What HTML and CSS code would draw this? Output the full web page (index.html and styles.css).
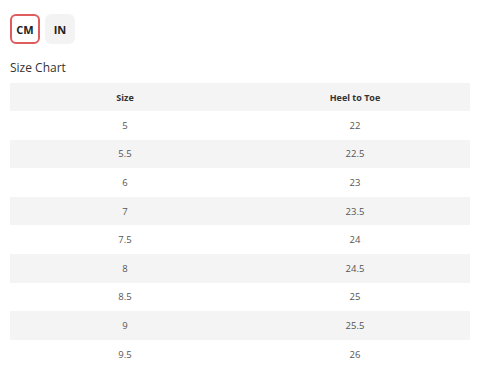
FILE: index.html
```html
<!DOCTYPE html>
<html>
<head>
<meta charset="utf-8">
<link rel="stylesheet" href="styles.css">
</head>
<body>
<div class="units">
  <button class="unit active">CM</button>
  <button class="unit">IN</button>
</div>
<div class="title">Size Chart</div>
<table class="chart">
  <thead><tr><th>Size</th><th>Heel to Toe</th></tr></thead>
  <tbody>
    <tr><td>5</td><td>22</td></tr>
    <tr><td>5.5</td><td>22.5</td></tr>
    <tr><td>6</td><td>23</td></tr>
    <tr><td>7</td><td>23.5</td></tr>
    <tr><td>7.5</td><td>24</td></tr>
    <tr><td>8</td><td>24.5</td></tr>
    <tr><td>8.5</td><td>25</td></tr>
    <tr><td>9</td><td>25.5</td></tr>
    <tr><td>9.5</td><td>26</td></tr>
  </tbody>
</table>
</body>
</html>
```
FILE: styles.css
```css
html, body { margin: 0; padding: 0; background: #fff; }
body {
  padding: 14px 10px 0 10px;
  font-family: "Open Sans", "Noto Sans", sans-serif;
  color: #333;
}
.units { display: flex; gap: 5px; }
.unit {
  width: 30px; height: 30px;
  box-sizing: border-box;
  border: 2px solid transparent;
  border-radius: 6px;
  background: #f3f3f3;
  font-family: "Open Sans", sans-serif;
  font-weight: 700;
  font-size: 11px;
  color: #222;
  padding: 0;
  display: flex; align-items: center; justify-content: center;
}
.unit.active { background: #fff; border-color: #e05c5c; }
.title {
  margin-top: 15px;
  font-size: 12px;
  line-height: 17px;
  color: #333;
  height: 24px;
}
.chart {
  width: 460px;
  border-collapse: collapse;
  table-layout: fixed;
  font-size: 9.5px;
}
.chart th, .chart td { width: 50%; text-align: center; padding: 0; }
.chart th {
  height: 28px;
  background: #f4f4f4;
  font-weight: 700;
  font-size: 9px;
  color: #333;
}
.chart td { height: 28.6px; color: #555; }
.chart tbody tr:nth-child(even) td { background: #f4f4f4; }
```
